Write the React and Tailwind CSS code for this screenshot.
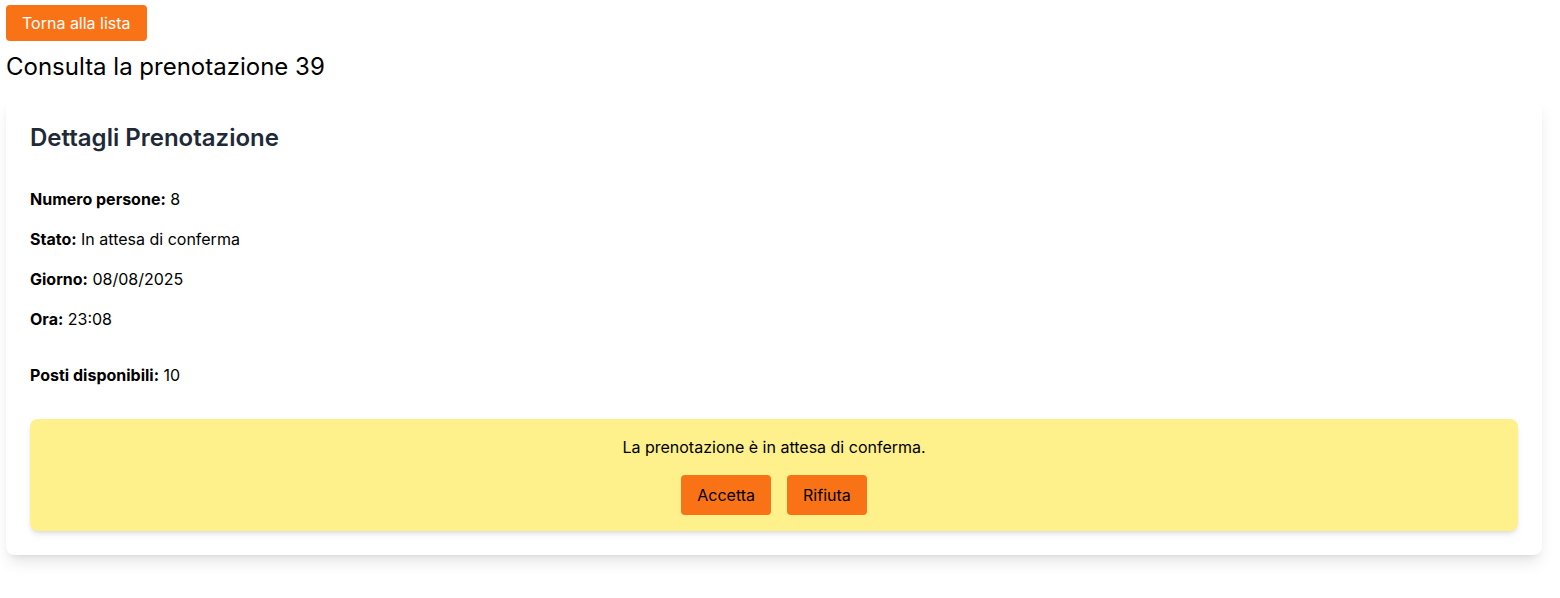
export default function App() {
  const rows = [
    ['Numero persone:', '8'],
    ['Stato:', 'In attesa di conferma'],
    ['Giorno:', '08/08/2025'],
    ['Ora:', '23:08'],
  ]

  return (
    <div className="min-h-screen bg-white px-1.5 pt-[5px] text-black" style={{ fontFamily: 'Inter, "Noto Sans", sans-serif' }}>
      <button className="bg-[#f97316] text-white text-base px-4 py-2 rounded h-9 leading-5">
        Torna alla lista
      </button>
      <h1 className="text-2xl font-normal mt-[10px]">Consulta la prenotazione 39</h1>

      {/* Card */}
      <div className="mt-[15px] mr-3 bg-white rounded-lg shadow-lg p-6">
        <h2 className="text-2xl font-semibold text-[#1f2937] mb-[33px]">Dettagli Prenotazione</h2>

        {rows.map(([label, value]) => (
          <p key={label} className="mb-4 text-base leading-6">
            <strong className="font-bold">{label}</strong> {value}
          </p>
        ))}

        <p className="mt-8 mb-8 text-base leading-6">
          <strong className="font-bold">Posti disponibili:</strong> 10
        </p>

        <div className="bg-[#fef08a] rounded-lg shadow-md p-4 text-center">
          <p className="text-base leading-6">La prenotazione è in attesa di conferma.</p>
          <div className="flex justify-center gap-4 mt-4">
            <button className="bg-[#f97316] text-black text-base px-4 py-2 rounded">Accetta</button>
            <button className="bg-[#f97316] text-black text-base px-4 py-2 rounded">Rifiuta</button>
          </div>
        </div>
      </div>
    </div>
  )
}
